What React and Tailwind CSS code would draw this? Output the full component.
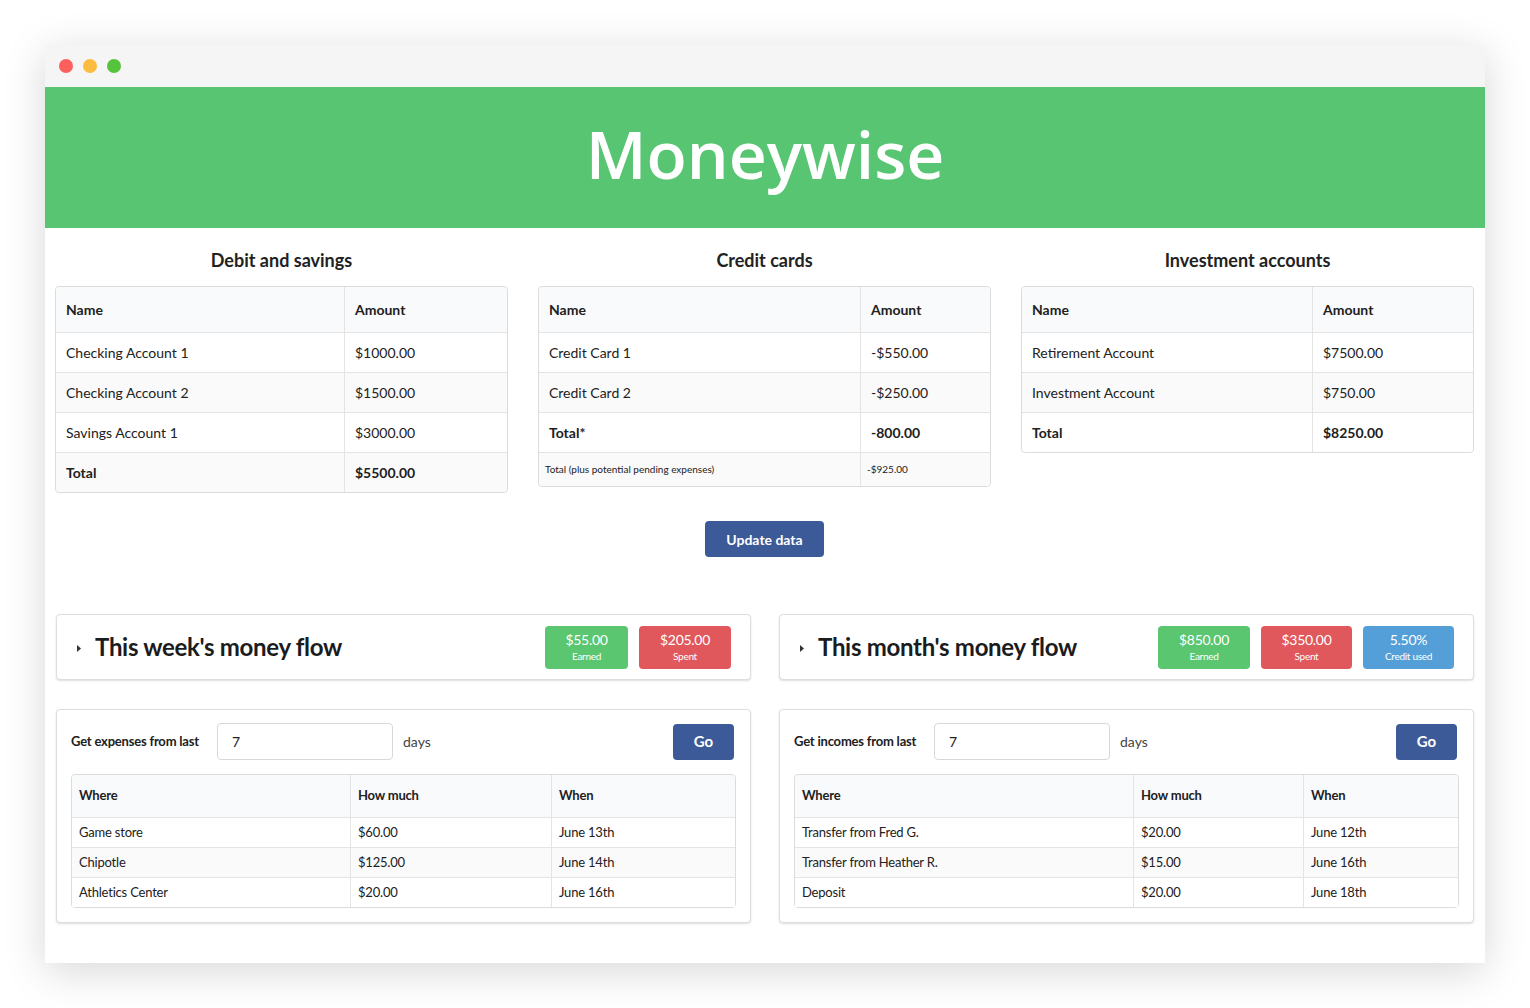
import React from "react";

const font = { fontFamily: "Lato, 'Open Sans', sans-serif" };

function AccountTable({ title, col1, rows }) {
  return (
    <div className="flex-1 min-w-0">
      <h3 className="text-center text-[18px] font-bold text-[#222] leading-[22px] pt-[21px] pb-[15px]">{title}</h3>
      <table className="w-full border-separate border-spacing-0 border border-[#dcdcdd] rounded-[4px] text-[14px] text-[#212121]">
        <colgroup>
          <col style={{ width: col1 }} />
          <col />
        </colgroup>
        <thead>
          <tr className="h-[45px]">
            <th className="text-left font-bold bg-[#f9fafb] px-[10px] rounded-tl-[4px]">Name</th>
            <th className="text-left font-bold bg-[#f9fafb] px-[10px] border-l border-[#e4e4e5] rounded-tr-[4px]">Amount</th>
          </tr>
        </thead>
        <tbody>
          {rows.map((r, i) => (
            <tr key={i} className={r.small ? "h-[34px]" : "h-[40px]"}>
              <td className={`border-t border-[#e4e4e5] ${r.small ? "px-[6px] text-[10px]" : "px-[10px]"} ${r.bold ? "font-bold" : ""} ${i % 2 === 1 ? "bg-[#fafafb]" : "bg-white"} ${i === rows.length - 1 ? "rounded-bl-[4px]" : ""}`}>{r.name}</td>
              <td className={`border-t border-l border-[#e4e4e5] ${r.small ? "px-[6px] text-[10px]" : "px-[10px]"} ${r.bold ? "font-bold" : ""} ${i % 2 === 1 ? "bg-[#fafafb]" : "bg-white"} ${i === rows.length - 1 ? "rounded-br-[4px]" : ""}`}>{r.amount}</td>
            </tr>
          ))}
        </tbody>
      </table>
    </div>
  );
}

function Badge({ color, value, label }) {
  return (
    <div className={`${color} text-white rounded-[4px] h-[43px] flex flex-col items-center justify-center leading-none`}>
      <div className="text-[14px] tracking-[-0.3px]">{value}</div>
      <div className="text-[10px] mt-[4px] tracking-[-0.3px]">{label}</div>
    </div>
  );
}

function FlowCard({ title, badges }) {
  return (
    <div className="flex-1 h-[66px] bg-white border border-[#dedede] rounded-[4px] shadow-[0_1px_2px_0_rgba(34,36,38,0.15)] flex items-center pl-[19px] pr-[19px]">
      <svg width="6" height="9" viewBox="0 0 6 9" className="mr-[13px] mt-[2px]">
        <path d="M1 1 L5 4.5 L1 8 Z" fill="#333" />
      </svg>
      <div className="text-[24px] font-bold text-[#1b1c1d] tracking-[-0.3px] flex-1">{title}</div>
      <div className="flex gap-[11px]">
        {badges.map((b, i) => (
          <div key={i} style={{ width: b.w }}>
            <Badge {...b} />
          </div>
        ))}
      </div>
    </div>
  );
}

function QueryCard({ label, inputX, cols, rows }) {
  return (
    <div className="flex-1 bg-white border border-[#dedede] rounded-[4px] shadow-[0_1px_2px_0_rgba(34,36,38,0.15)] pt-[13px] pb-[14px] px-[14px]">
      <div className="flex items-center h-[37px]">
        <div className="text-[13px] font-bold text-[#212121] tracking-[-0.2px]" style={{ width: inputX }}>{label}</div>
        <div className="w-[176px] h-[37px] border border-[#d8d8d9] rounded-[4px] flex items-center px-[14px] text-[14px] text-[#212121]">7</div>
        <div className="ml-[10px] text-[14px] text-[#444] flex-1">days</div>
        <button className="w-[61px] h-[36px] bg-[#3d5a98] text-white rounded-[4px] text-[15px] font-bold mr-[2px]">Go</button>
      </div>
      <table className="w-full mt-[14px] border-separate border-spacing-0 border border-[#dcdcdd] rounded-[4px] text-[13px] text-[#212121] tracking-[-0.2px]">
        <colgroup>
          <col style={{ width: cols[0] }} />
          <col style={{ width: cols[1] }} />
          <col />
        </colgroup>
        <thead>
          <tr className="h-[42px]">
            <th className="text-left font-bold bg-[#f9fafb] px-[7px] rounded-tl-[4px]">Where</th>
            <th className="text-left font-bold bg-[#f9fafb] px-[7px] border-l border-[#e4e4e5]">How much</th>
            <th className="text-left font-bold bg-[#f9fafb] px-[7px] border-l border-[#e4e4e5] rounded-tr-[4px]">When</th>
          </tr>
        </thead>
        <tbody>
          {rows.map((r, i) => (
            <tr key={i} className="h-[30px]">
              {r.map((c, j) => (
                <td key={j} className={`border-t border-[#e4e4e5] px-[7px] ${j > 0 ? "border-l" : ""} ${i % 2 === 1 ? "bg-[#fafafb]" : "bg-white"}`}>{c}</td>
              ))}
            </tr>
          ))}
        </tbody>
      </table>
    </div>
  );
}

export default function App() {
  return (
    <div className="min-h-[1008px] bg-white pt-[45px] px-[45px]" style={font}>
      <div className="w-[1440px] h-[918px] bg-white shadow-[0_8px_40px_rgba(0,0,0,0.16)] flex flex-col">
        <div className="h-[42px] bg-[#f5f5f5] flex items-center pl-[14px] gap-[10px]">
          <div className="w-[14px] h-[14px] rounded-full bg-[#fc605c]" />
          <div className="w-[14px] h-[14px] rounded-full bg-[#fcbc40]" />
          <div className="w-[14px] h-[14px] rounded-full bg-[#56c33c]" />
        </div>
        <div className="h-[141px] bg-[#58c572] flex items-center justify-center">
          <h1 className="text-white text-[66px] font-semibold leading-none mt-[-9px]" style={{ fontFamily: "'Open Sans', sans-serif" }}>Moneywise</h1>
        </div>
        <div className="px-[10px] pr-[11px]">
          <div className="flex gap-[30px]">
            <AccountTable
              title="Debit and savings"
              col1="288px"
              rows={[
                { name: "Checking Account 1", amount: "$1000.00" },
                { name: "Checking Account 2", amount: "$1500.00" },
                { name: "Savings Account 1", amount: "$3000.00" },
                { name: "Total", amount: "$5500.00", bold: true },
              ]}
            />
            <AccountTable
              title="Credit cards"
              col1="321px"
              rows={[
                { name: "Credit Card 1", amount: "-$550.00" },
                { name: "Credit Card 2", amount: "-$250.00" },
                { name: "Total*", amount: "-800.00", bold: true },
                { name: "Total (plus potential pending expenses)", amount: "-$925.00", small: true },
              ]}
            />
            <AccountTable
              title="Investment accounts"
              col1="290px"
              rows={[
                { name: "Retirement Account", amount: "$7500.00" },
                { name: "Investment Account", amount: "$750.00" },
                { name: "Total", amount: "$8250.00", bold: true },
              ]}
            />
          </div>
          <div className="flex justify-center mt-[28px]">
            <button className="w-[119px] h-[36px] bg-[#3d5a98] text-white rounded-[4px] text-[14px] font-bold">Update data</button>
          </div>
          <div className="flex gap-[28px] mt-[57px] pl-[1px]">
            <FlowCard
              title="This week's money flow"
              badges={[
                { color: "bg-[#5ac670]", value: "$55.00", label: "Earned", w: "83px" },
                { color: "bg-[#e0575c]", value: "$205.00", label: "Spent", w: "92px" },
              ]}
            />
            <FlowCard
              title="This month's money flow"
              badges={[
                { color: "bg-[#5ac670]", value: "$850.00", label: "Earned", w: "92px" },
                { color: "bg-[#e0575c]", value: "$350.00", label: "Spent", w: "91px" },
                { color: "bg-[#559fd9]", value: "5.50%", label: "Credit used", w: "91px" },
              ]}
            />
          </div>
          <div className="flex gap-[28px] mt-[29px] pl-[1px]">
            <QueryCard
              label="Get expenses from last"
              inputX="146px"
              cols={["278px", "201px"]}
              rows={[
                ["Game store", "$60.00", "June 13th"],
                ["Chipotle", "$125.00", "June 14th"],
                ["Athletics Center", "$20.00", "June 16th"],
              ]}
            />
            <QueryCard
              label="Get incomes from last"
              inputX="140px"
              cols={["338px", "170px"]}
              rows={[
                ["Transfer from Fred G.", "$20.00", "June 12th"],
                ["Transfer from Heather R.", "$15.00", "June 16th"],
                ["Deposit", "$20.00", "June 18th"],
              ]}
            />
          </div>
        </div>
      </div>
    </div>
  );
}
